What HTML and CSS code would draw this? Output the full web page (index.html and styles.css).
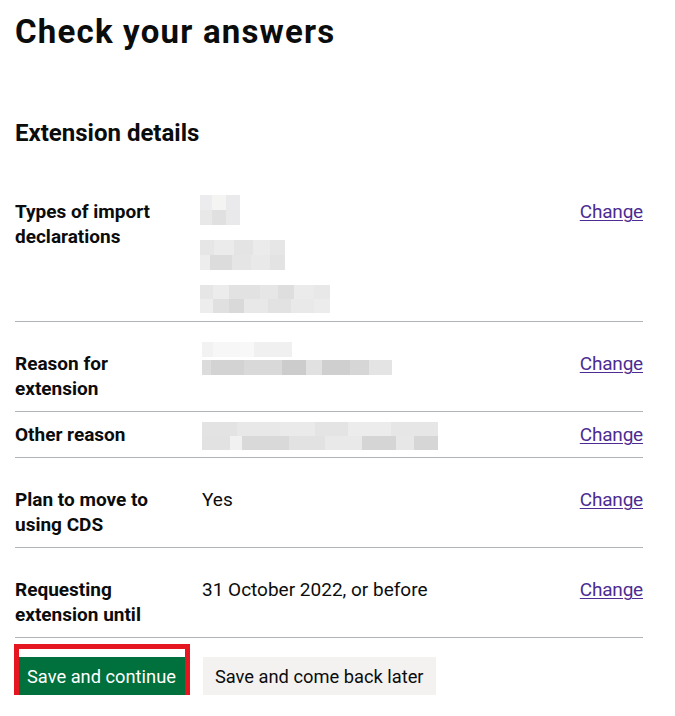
FILE: index.html
```html
<!DOCTYPE html>
<html lang="en">
<head>
<meta charset="utf-8">
<title>Check your answers</title>
<link rel="stylesheet" href="styles.css">
</head>
<body>
<main class="page">
  <h1 class="title">Check your answers</h1>
  <h2 class="subtitle">Extension details</h2>
  <dl class="summary">
    <div class="row row--first">
      <dt class="key">Types of import declarations</dt>
      <dd class="value value--stack">
        <span class="mosaic mosaic--a"></span>
        <span class="mosaic mosaic--b"></span>
        <span class="mosaic mosaic--c"></span>
      </dd>
      <dd class="actions"><a class="link" href="#">Change</a></dd>
    </div>
    <div class="row row--spaced">
      <dt class="key">Reason for extension</dt>
      <dd class="value">
        <span class="mosaic mosaic--d"><span class="mosaic-top"></span><span class="mosaic-bottom"></span></span>
      </dd>
      <dd class="actions"><a class="link" href="#">Change</a></dd>
    </div>
    <div class="row">
      <dt class="key">Other reason</dt>
      <dd class="value"><span class="mosaic mosaic--e"></span></dd>
      <dd class="actions"><a class="link" href="#">Change</a></dd>
    </div>
    <div class="row row--spaced">
      <dt class="key">Plan to move to using CDS</dt>
      <dd class="value">Yes</dd>
      <dd class="actions"><a class="link" href="#">Change</a></dd>
    </div>
    <div class="row row--spaced">
      <dt class="key">Requesting extension until</dt>
      <dd class="value">31 October 2022, or before</dd>
      <dd class="actions"><a class="link" href="#">Change</a></dd>
    </div>
  </dl>
  <div class="button-group">
    <button class="button button--primary" type="button">Save and continue</button>
    <button class="button button--secondary" type="button">Save and come back later</button>
    <span class="highlight" aria-hidden="true"></span>
  </div>
</main>
</body>
</html>
```

FILE: styles.css
```css
* { box-sizing: border-box; }

html, body {
  margin: 0;
  padding: 0;
  background: #ffffff;
}

body {
  font-family: Roboto, "Liberation Sans", Arial, sans-serif;
  color: #0b0c0c;
}

.page {
  padding: 0 32px 0 15px;
}

.title {
  margin: 12px 0 0;
  font-size: 33px;
  line-height: 40px;
  font-weight: 700;
  letter-spacing: 1.2px;
}

.subtitle {
  margin: 66px 0 0;
  font-size: 24px;
  line-height: 30px;
  font-weight: 700;
}

.summary {
  margin: 41px 0 0;
  padding: 0;
}

.row {
  display: grid;
  grid-template-columns: 187px 1fr 126px;
  align-items: start;
  padding: 10px 0;
  border-bottom: 1px solid #b1b4b6;
  font-size: 19px;
  line-height: 25px;
}

.row--first {
  padding-bottom: 8px;
}

.row--spaced {
  padding-top: 29px;
}

.key {
  margin: 0;
  padding-right: 20px;
  font-weight: 700;
}

.value {
  margin: 0;
  padding-right: 20px;
}

.value--stack {
  display: flex;
  flex-direction: column;
  align-items: flex-start;
  gap: 15px;
  margin-top: -4px;
  margin-left: -2px;
}

.actions {
  margin: 0;
  text-align: right;
}

.link {
  color: #4c2c92;
  text-decoration: underline;
  text-decoration-thickness: 1px;
  text-underline-offset: 2px;
  letter-spacing: -0.2px;
}

.mosaic {
  display: block;
}

.mosaic--a {
  width: 40px;
  height: 30px;
  background:
    linear-gradient(to right, #ececee 0 30%, #f4f4f2 30% 65%, #eaeaec 65% 100%) top / 100% 50% no-repeat,
    linear-gradient(to right, #e8e8e8 0 30%, #dfe0df 30% 65%, #e9e9eb 65% 100%) bottom / 100% 50% no-repeat;
}

.mosaic--b {
  width: 85px;
  height: 30px;
  background:
    linear-gradient(to right, #e6e6e6 0 16%, #ebebeb 16% 40%, #e4e4e4 40% 62%, #ebebeb 62% 82%, #e6e6e6 82% 100%) top / 100% 50% no-repeat,
    linear-gradient(to right, #ededed 0 12%, #dcdcdc 12% 38%, #e5e5e5 38% 60%, #e9e9e9 60% 82%, #e3e3e3 82% 100%) bottom / 100% 50% no-repeat;
}

.mosaic--c {
  width: 130px;
  height: 28px;
  background:
    linear-gradient(to right, #e6e6e6 0 10%, #ececec 10% 22%, #e2e2e2 22% 46%, #e6e6e6 46% 60%, #dedede 60% 72%, #ebebeb 72% 88%, #e8e8e8 88% 100%) top / 100% 50% no-repeat,
    linear-gradient(to right, #ededed 0 10%, #e0e0e0 10% 22%, #d9d9d9 22% 34%, #e8e8e8 34% 52%, #e2e2e2 52% 70%, #e9e9e9 70% 88%, #ececec 88% 100%) bottom / 100% 50% no-repeat;
}

.mosaic--d {
  width: 190px;
  height: 33px;
  margin-top: -9px;
  display: flex;
  flex-direction: column;
  gap: 3px;
}

.mosaic-top {
  display: block;
  width: 90px;
  height: 15px;
  background: linear-gradient(to right, #f2f2f2 0 12%, #f7f7f7 12% 42%, #f8f8f8 42% 58%, #f0f0f0 58% 100%);
}

.mosaic-bottom {
  display: block;
  width: 190px;
  height: 15px;
  background: linear-gradient(to right, #dcdcdc 0 5%, #d3d3d3 5% 22%, #d9d9d9 22% 42%, #cccccc 42% 55%, #e1e1e1 55% 63%, #cfcfcf 63% 78%, #d6d6d6 78% 88%, #e4e4e4 88% 100%);
}

.mosaic--e {
  width: 236px;
  height: 28px;
  margin-bottom: -3px;
  background:
    linear-gradient(to right, #e3e3e3 0 15%, #e8e8e8 15% 33%, #eaeaea 33% 48%, #e4e4e4 48% 62%, #ececec 62% 80%, #e6e6e6 80% 100%) top / 100% 50% no-repeat,
    linear-gradient(to right, #e2e2e2 0 12%, #f1f1f1 12% 17%, #d9d9d9 17% 37%, #e2e2e2 37% 52%, #e9e9e9 52% 68%, #d5d5d5 68% 82%, #e7e7e7 82% 90%, #d6d6d6 90% 100%) bottom / 100% 50% no-repeat;
}

.button-group {
  position: relative;
  display: flex;
  gap: 15px;
  margin-top: 19px;
}

.button {
  font-family: Roboto, "Liberation Sans", Arial, sans-serif;
  font-size: 18.3px;
  line-height: 19px;
  padding: 8px 10px 7px;
  border: 2px solid transparent;
  border-radius: 0;
  cursor: pointer;
  margin: 0;
}

.button--primary {
  background: #00703c;
  color: #ffffff;
  box-shadow: 0 2px 0 #002d18;
}

.button--secondary {
  background: #f3f2f1;
  color: #0b0c0c;
  box-shadow: 0 2px 0 #929191;
}

.highlight {
  position: absolute;
  left: -1px;
  top: -13px;
  width: 176px;
  height: 59px;
  border: 5px solid #e5161f;
  pointer-events: none;
}
```
